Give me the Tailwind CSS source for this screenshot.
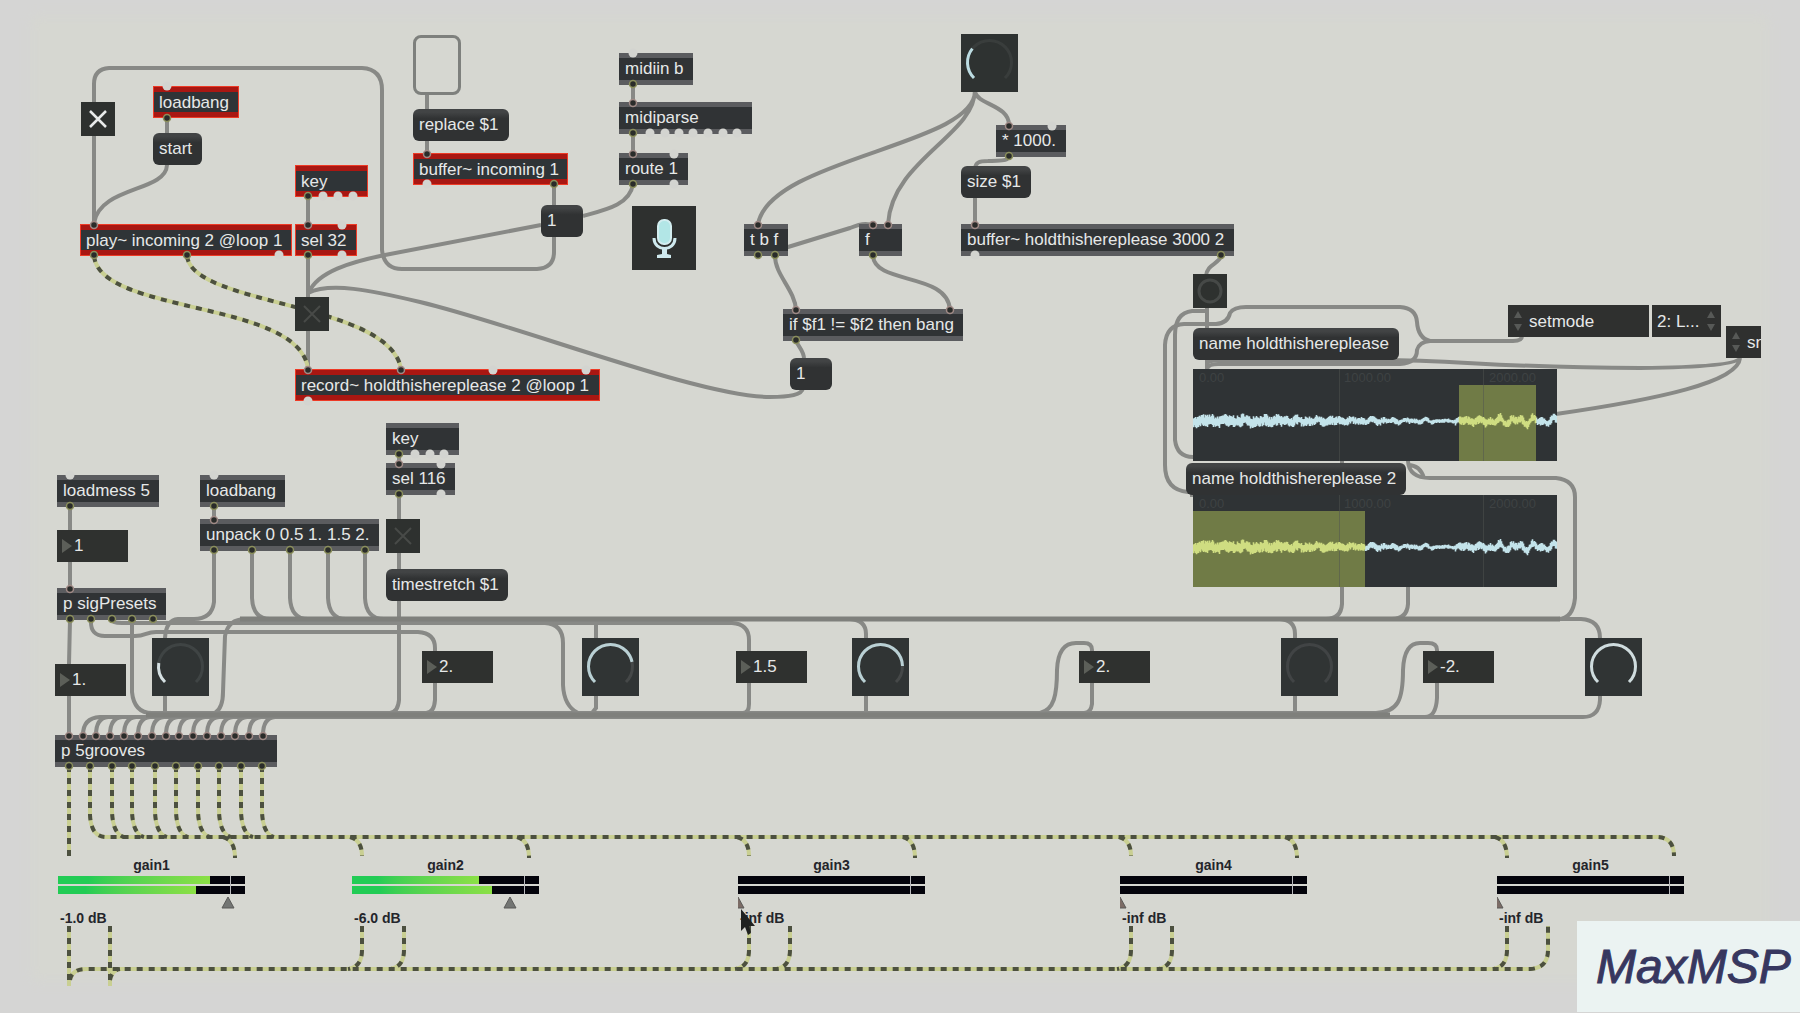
<!DOCTYPE html>
<html lang="en">
<head>
<meta charset="utf-8">
<meta name="viewport" content="width=device-width, initial-scale=1">
<title>MaxMSP patch</title>
<script src="https://cdn.jsdelivr.net/npm/@tailwindcss/browser@4"></script>
</head>
<body class="bg-[#d5d5d4] font-['Liberation_Sans',Arial,sans-serif]">
<main class="relative min-h-screen w-full overflow-hidden text-[17px] leading-none text-[#e6e8e8]
  [&_.obj]:absolute [&_.obj]:flex [&_.obj]:h-8 [&_.obj]:items-center [&_.obj]:whitespace-nowrap [&_.obj]:border-y-[5px] [&_.obj]:border-[#5b5c5f] [&_.obj]:bg-[#303335] [&_.obj]:pb-[2px] [&_.obj]:pl-[6px]
  [&_.hot]:absolute [&_.hot]:flex [&_.hot]:h-8 [&_.hot]:items-center [&_.hot]:whitespace-nowrap [&_.hot]:border-y-[6px] [&_.hot]:border-[#a91712] [&_.hot]:bg-[#2f3437] [&_.hot]:pl-[6px] [&_.hot]:outline-1 [&_.hot]:-outline-offset-1 [&_.hot]:outline-[#ee3a26]
  [&_.msg]:absolute [&_.msg]:flex [&_.msg]:h-8 [&_.msg]:items-center [&_.msg]:whitespace-nowrap [&_.msg]:rounded-md [&_.msg]:bg-linear-to-b [&_.msg]:from-[#424445] [&_.msg]:from-10% [&_.msg]:to-[#303233] [&_.msg]:to-30% [&_.msg]:pb-[2px] [&_.msg]:pl-[6px]
  [&_.num]:absolute [&_.num]:flex [&_.num]:h-8 [&_.num]:w-[71px] [&_.num]:items-center [&_.num]:gap-[2px] [&_.num]:bg-[#2f312f] [&_.num]:pl-[5px]
  [&_.num_input]:w-12 [&_.num_input]:bg-transparent [&_.num_input]:outline-none
  [&_.tog]:absolute [&_.tog]:size-[34px] [&_.tog]:bg-[#2e312f]
  [&_.knob]:absolute [&_.knob]:top-[638px] [&_.knob]:h-[58px] [&_.knob]:w-[57px] [&_.knob]:bg-[#303434]
  [&_.ctl]:absolute [&_.ctl]:inset-0 [&_.ctl]:size-full [&_.ctl]:opacity-0">

  <div class="absolute bottom-[40px] left-[40px] right-[40px] top-[24px] bg-[#d6d7d1] shadow-[0_0_12px_8px_#d6d7d1]"></div>

  <!-- patch cords -->
  <svg class="pointer-events-none absolute inset-0 size-full overflow-visible" fill="none" stroke="#888986" stroke-width="4" aria-hidden="true">
    <path d="M94 223V84Q94 69 109 68H362Q382 69 382 90V250Q384 269 402 269H537Q554 268 554 252V185"/>
    <path d="M167 118V133M167 165C166 192 100 186 94 223"/>
    <path d="M308 197V369M427 94V153M633 84V102M633 133V153"/>
    <path d="M633 184C630 205 605 210 583 216M541 225L385 255C350 262 318 272 309 292"/>
    <path d="M308 293C330 282 370 290 420 302C520 326 700 397 770 397C790 397 802 395 803 388"/>
    <path d="M975 90C978 145 770 158 758 224M975 90C975 135 892 160 888 224M975 92C978 105 1010 105 1009 126"/>
    <path d="M1009 156C1008 162 1000 160 988 161C978 161 976 163 975 168M975 196V224"/>
    <path d="M775 251L850 228Q866 221 873 226M775 256C775 275 795 290 796 310M873 256C875 285 948 272 950 310M796 340C797 346 804 350 804 359"/>
    <path d="M1221 256C1219 264 1207 264 1206 276"/>
    <path d="M1207 306V370M1207 311H1192Q1175 313 1175 335V440Q1177 457 1193 457"/>
    <path d="M1194 492H1188Q1165 490 1165 465V345Q1166 325 1184 324H1216Q1228 323 1230 313Q1234 307 1246 307H1400Q1416 308 1417 322Q1418 338 1430 341H1513Q1522 341 1522 336"/>
    <path d="M1207 369Q1208 364 1218 364H1400Q1417 363 1417 350Q1419 342 1430 341"/>
    <path d="M1207 363Q1210 360 1225 360H1380C1460 360 1500 368 1640 368Q1736 367 1740 358M1740 358C1738 382 1660 399 1556 414"/>
    <path d="M1408 461Q1409 478 1430 478H1556Q1575 480 1575 497V598Q1573 619 1558 619M1408 465Q1420 465 1424 478"/>
    <path d="M1342 461V463M1190 495H1400M1342 587V604Q1341 619 1326 619M1408 587V604Q1407 619 1392 619"/>
    <path d="M70 506V530M70 562V588M70 620L69 664V735M214 506V519"/>
    <path d="M214 550V602Q212 619 194 619H178Q166 620 165 638V713M252 550V598Q253 619 270 619M290 550V598Q291 619 308 619M328 550V598Q329 619 346 619M365 550V598Q366 619 384 619"/>
    <path d="M91 620Q90 636 105 636H135C146 636 146 632 156 632H418Q435 633 435 648V700Q434 713 426 713"/>
    <path d="M112 620Q112 623 122 623H732Q749 624 749 640V704Q749 713 743 713"/>
    <path d="M132 620V692Q134 713 152 713H1376C1398 712 1403 700 1403 670Q1404 643 1420 643H1428Q1437 643 1437 650V698Q1436 717 1425 717"/>
    <path d="M215 713Q223 708 223 692L225 636Q228 619 246 619H1581Q1600 620 1600 638V700Q1599 717 1583 717H100Q83 718 83 735"/>
    <path d="M545 623Q563 624 563 643V685Q564 706 578 713M596 620V708L592 713M850 619Q866 620 866 634V713M1280 619Q1295 620 1295 634V713"/>
    <path d="M1040 713C1054 710 1057 695 1057 670Q1058 643 1076 643H1084Q1092 643 1092 650V704Q1091 713 1084 713"/>
    <path d="M399 454V700Q398 712 390 713"/>
    <path d="M96 735Q96 718 108 717M110 735Q110 718 122 717M124 735Q124 718 136 717M138 735Q138 718 150 717M152 735Q152 718 164 717M166 735Q166 718 178 717M179 735Q179 718 191 717M193 735Q193 718 205 717M207 735Q207 718 219 717M221 735Q221 718 233 717M235 735Q235 718 247 717M249 735Q249 718 261 717M263 735Q263 718 275 717"/>
    <path d="M146 715H1390M240 619H1560" stroke="#7f807c" stroke-width="5"/>
  </svg>

  <!-- signal cords: pale green line with dark dashes -->
  <svg class="pointer-events-none absolute inset-0 size-full overflow-visible" fill="none" aria-hidden="true">
    <defs>
      <g id="signals">
        <path d="M94 256C100 315 300 300 308 369M187 256C192 306 390 302 401 369"/>
        <path d="M69 766V856M90 766V815Q91 837 106 837H1658Q1674 838 1674 856"/>
        <path d="M112 766V812Q113 834 124 837M132 766V812Q133 834 144 837M155 766V812Q156 834 167 837M176 766V812Q177 834 188 837M198 766V812Q199 834 210 837M219 766V812Q220 834 231 837M241 766V812Q242 834 253 837M262 766V812Q263 834 274 837"/>
        <path d="M223 837Q235 840 235 858M350 837Q362 840 362 856M517 837Q529 840 529 858M737 837Q749 840 749 856M903 837Q915 840 915 858M1119 837Q1131 840 1131 856M1285 837Q1297 840 1297 858M1495 837Q1507 840 1507 858"/>
        <path d="M69 926V986M110 926V986M70 980Q72 969 86 969H1530Q1548 968 1548 950V926M110 980Q112 970 120 969"/>
        <path d="M362 926V950Q362 967 348 969M404 926V950Q404 967 390 969M749 926V950Q749 967 735 969M790 926V950Q790 967 776 969M1131 926V950Q1131 967 1117 969M1172 926V950Q1172 967 1158 969M1507 926V950Q1507 967 1493 969"/>
      </g>
    </defs>
    <use href="#signals" stroke="#c9cf92" stroke-width="4"/>
    <use href="#signals" stroke="#4c503f" stroke-width="4" stroke-dasharray="6 6"/>
  </svg>

  <!-- playback and recording -->
  <label class="tog left-[81px] top-[102px]"><input class="ctl" type="checkbox" aria-label="Play" checked>
    <svg class="size-full" viewBox="0 0 34 34"><path d="M9 9l16 16M25 9L9 25" stroke="#e8eaea" stroke-width="2.5"/></svg></label>
  <div class="hot left-[153px] top-[86px] w-[86px]">loadbang</div>
  <button class="msg left-[153px] top-[133px] w-[49px]">start</button>
  <div class="hot left-[80px] top-[224px] w-[212px]">play~ incoming 2 @loop 1</div>
  <div class="hot left-[295px] top-[165px] w-[73px]">key</div>
  <div class="hot left-[295px] top-[224px] w-[62px]">sel 32</div>
  <label class="tog left-[295px] top-[297px]"><input class="ctl" type="checkbox" aria-label="Record">
    <svg class="size-full" viewBox="0 0 34 34"><path d="M9 9l16 16M25 9L9 25" stroke="#484a48" stroke-width="2"/></svg></label>
  <div class="hot left-[295px] top-[369px] w-[305px]">record~ holdthishereplease 2 @loop 1</div>

  <button class="absolute left-[413px] top-[35px] h-[60px] w-[48px] rounded-lg border-[3px] border-[#7e807d]" aria-label="Drop file"></button>
  <button class="msg left-[413px] top-[109px] w-[96px]">replace $1</button>
  <div class="hot left-[413px] top-[153px] w-[155px]">buffer~ incoming 1</div>
  <button class="msg left-[541px] top-[205px] w-[42px]">1</button>

  <div class="obj left-[619px] top-[53px] w-[74px]">midiin b</div>
  <div class="obj left-[619px] top-[102px] w-[133px]">midiparse</div>
  <div class="obj left-[619px] top-[153px] w-[69px]">route 1</div>
  <button class="absolute left-[632px] top-[206px] size-16 bg-[#2e302f]" aria-label="Microphone">
    <svg class="size-full" viewBox="0 0 64 64"><rect x="26" y="14" width="13" height="24" rx="6" fill="#b2e6e6" stroke="#d3edf0" stroke-width="2"/><path d="M22 32C22 46 43 46 43 32" fill="none" stroke="#cfe9ee" stroke-width="3"/><path d="M30 42H35V48L39 49V52H25V49L30 48Z" fill="#cfe9ee"/></svg></button>

  <!-- buffer sizing -->
  <label class="absolute left-[961px] top-[34px] h-[58px] w-[57px] bg-[#2e3231]"><input class="ctl" type="range" value="30" aria-label="Buffer seconds">
    <svg class="size-full" viewBox="0 0 57 58" fill="none" stroke-width="3"><path d="M13 44A22 22 0 1 1 44 44" stroke="#393d3c"/><path d="M13 44A22 22 0 1 1 44 44" stroke="#bcdce2" pathLength="100" stroke-dasharray="31 100"/></svg></label>
  <div class="obj left-[996px] top-[125px] w-[70px]">* 1000.</div>
  <button class="msg left-[961px] top-[166px] w-[70px]">size $1</button>
  <div class="obj left-[961px] top-[224px] w-[273px]">buffer~ holdthishereplease 3000 2</div>
  <div class="obj left-[744px] top-[224px] w-[44px]">t b f</div>
  <div class="obj left-[859px] top-[224px] w-[43px]">f</div>
  <div class="obj left-[783px] top-[309px] w-[180px]">if $f1 != $f2 then bang</div>
  <button class="msg left-[790px] top-[358px] w-[42px]">1</button>

  <!-- waveform views -->
  <button class="tog left-[1193px] top-[274px]" aria-label="Bang">
    <svg class="size-full" viewBox="0 0 34 34"><circle cx="17" cy="17" r="11" fill="none" stroke="#464947" stroke-width="3"/></svg></button>
  <svg class="absolute left-[1193px] top-[369px] h-[92px] w-[364px] bg-[#2f3335]" data-wave="266 343" role="img" aria-label="Waveform one"></svg>
  <svg class="absolute left-[1193px] top-[495px] h-[92px] w-[364px] bg-[#2f3335]" data-wave="0 172" role="img" aria-label="Waveform two"></svg>
  <button class="msg left-[1193px] top-[328px] w-[206px]">name holdthishereplease</button>
  <button class="msg left-[1186px] top-[463px] w-[220px]">name holdthishereplease 2</button>

  <div class="absolute left-[1508px] top-[305px] flex h-8 w-[213px] gap-[3px]">
    <div class="relative w-[141px] bg-[#2f302f]">
      <svg class="pointer-events-none absolute left-[6px] top-[6px] h-5 w-2" viewBox="0 0 8 20" fill="#575957"><path d="M0 7L4 0L8 7ZM0 13H8L4 20Z"/></svg>
      <select class="h-full w-full appearance-none bg-transparent pl-[21px] leading-none outline-none" aria-label="Attribute"><option>setmode</option></select>
    </div>
    <div class="relative grow bg-[#2f302f]">
      <svg class="pointer-events-none absolute right-[6px] top-[6px] h-5 w-2" viewBox="0 0 8 20" fill="#575957"><path d="M0 7L4 0L8 7ZM0 13H8L4 20Z"/></svg>
      <select class="h-full w-full appearance-none bg-transparent pl-[5px] leading-none outline-none" aria-label="Mode"><option>2: L...</option></select>
    </div>
  </div>
  <div class="absolute left-[1726px] top-[326px] h-8 w-[35px] overflow-hidden bg-[#2f302f]">
    <svg class="pointer-events-none absolute left-[6px] top-[6px] h-5 w-2" viewBox="0 0 8 20" fill="#575957"><path d="M0 7L4 0L8 7ZM0 13H8L4 20Z"/></svg>
    <select class="h-full w-24 appearance-none bg-transparent pl-[21px] leading-none outline-none" aria-label="Snap attribute"><option>snapto</option></select>
  </div>

  <!-- presets -->
  <div class="obj left-[57px] top-[475px] w-[102px]">loadmess 5</div>
  <label class="num left-[57px] top-[530px]"><svg class="h-[14px] w-[10px]" viewBox="0 0 10 14" fill="#5c5f59"><path d="M0 0L10 7L0 14Z"/></svg><input value="1" aria-label="Preset"></label>
  <div class="obj left-[57px] top-[588px] w-[109px]">p sigPresets</div>
  <label class="num left-[55px] top-[664px]"><svg class="h-[14px] w-[10px]" viewBox="0 0 10 14" fill="#5c5f59"><path d="M0 0L10 7L0 14Z"/></svg><input value="1." aria-label="Speed 1"></label>
  <div class="obj left-[200px] top-[475px] w-[85px]">loadbang</div>
  <div class="obj left-[200px] top-[519px] w-[179px]">unpack 0 0.5 1. 1.5 2.</div>
  <div class="obj left-[386px] top-[423px] w-[73px]">key</div>
  <div class="obj left-[386px] top-[463px] w-[69px]">sel 116</div>
  <label class="tog left-[386px] top-[519px]"><input class="ctl" type="checkbox" aria-label="Time stretch">
    <svg class="size-full" viewBox="0 0 34 34"><path d="M9 9l16 16M25 9L9 25" stroke="#484a48" stroke-width="2"/></svg></label>
  <button class="msg left-[386px] top-[569px] w-[122px]">timestretch $1</button>
  <div class="obj left-[55px] top-[735px] w-[222px]">p 5grooves</div>

  <!-- speed numbers and phase dials -->
  <label class="knob left-[152px]"><input class="ctl" type="range" value="20" aria-label="Dial 1">
    <svg class="size-full" viewBox="0 0 57 58" fill="none" stroke-width="3"><path d="M13 44A22 22 0 1 1 44 44" stroke="#3f4444"/><path d="M13 44A22 22 0 1 1 44 44" stroke="#d5e0e2" pathLength="100" stroke-dasharray="20 100"/></svg></label>
  <label class="num left-[422px] top-[651px]"><svg class="h-[14px] w-[10px]" viewBox="0 0 10 14" fill="#5c5f59"><path d="M0 0L10 7L0 14Z"/></svg><input value="2." aria-label="Speed 2"></label>
  <label class="knob left-[582px]"><input class="ctl" type="range" value="79" aria-label="Dial 2">
    <svg class="size-full" viewBox="0 0 57 58" fill="none" stroke-width="3"><path d="M13 44A22 22 0 1 1 44 44" stroke="#454848"/><path d="M13 44A22 22 0 1 1 44 44" stroke="#b9d0d4" pathLength="100" stroke-dasharray="79 100"/></svg></label>
  <label class="num left-[736px] top-[651px]"><svg class="h-[14px] w-[10px]" viewBox="0 0 10 14" fill="#5c5f59"><path d="M0 0L10 7L0 14Z"/></svg><input value="1.5" aria-label="Speed 3"></label>
  <label class="knob left-[852px]"><input class="ctl" type="range" value="83" aria-label="Dial 3">
    <svg class="size-full" viewBox="0 0 57 58" fill="none" stroke-width="3"><path d="M13 44A22 22 0 1 1 44 44" stroke="#454848"/><path d="M13 44A22 22 0 1 1 44 44" stroke="#b9d0d4" pathLength="100" stroke-dasharray="83 100"/></svg></label>
  <label class="num left-[1079px] top-[651px]"><svg class="h-[14px] w-[10px]" viewBox="0 0 10 14" fill="#5c5f59"><path d="M0 0L10 7L0 14Z"/></svg><input value="2." aria-label="Speed 4"></label>
  <label class="knob left-[1281px]"><input class="ctl" type="range" value="0" aria-label="Dial 4">
    <svg class="size-full" viewBox="0 0 57 58" fill="none" stroke-width="3"><path d="M13 44A22 22 0 1 1 44 44" stroke="#414445"/></svg></label>
  <label class="num left-[1423px] top-[651px]"><svg class="h-[14px] w-[10px]" viewBox="0 0 10 14" fill="#5c5f59"><path d="M0 0L10 7L0 14Z"/></svg><input value="-2." aria-label="Speed 5"></label>
  <label class="knob left-[1585px]"><input class="ctl" type="range" value="100" aria-label="Dial 5">
    <svg class="size-full" viewBox="0 0 57 58" fill="none" stroke-width="3"><path d="M13 44A22 22 0 1 1 44 44" stroke="#cfdcde"/></svg></label>

  <!-- inlets and outlets -->
  <svg id="ports" class="pointer-events-none absolute inset-0 size-full overflow-visible" aria-hidden="true"></svg>

  <!-- gain sliders -->
  <div id="gains"></div>

  <svg class="pointer-events-none absolute left-[740px] top-[908px] h-[28px] w-[16px]" viewBox="0 0 16 28" aria-hidden="true"><path d="M1 1V23L5 19L8 27L11 25L9 18H15Z" fill="#1f2120"/></svg>

  <div class="absolute bottom-px right-0 flex h-[91px] w-[223px] items-center bg-[#ebf3f2] pl-[19px] text-[48px] italic text-[#37375f] [-webkit-text-stroke:1px_#37375f]">MaxMSP</div>
</main>

<script>
const NS = 'http://www.w3.org/2000/svg';
const add = (parent, tag, attrs) => {
  const el = document.createElementNS(NS, tag);
  for (const k in attrs) el.setAttribute(k, attrs[k]);
  parent.append(el);
  return el;
};

// [edge y, connected x positions, free x positions]
const ports = document.getElementById('ports');
const inlet = '#a08a86', outlet = '#8b8f5c';
[
  [86, [], [167]], [118, [167], [], outlet], [225, [94, 308, 758, 873, 888, 975], [342], inlet],
  [255, [94, 187, 308, 758, 775, 873, 1221], [279, 342, 975], outlet],
  [196, [308], [323, 338, 353], outlet], [370, [308, 401], [493, 586], inlet], [401, [], [308]],
  [154, [427, 633], [674], inlet], [184, [554, 633], [427, 674], outlet],
  [53, [], [633]], [84, [633], [], outlet], [103, [633], [], inlet], [133, [633], [650, 665, 679, 693, 708, 723, 737], outlet],
  [126, [1009], [1052], inlet], [156, [1009], [], outlet], [310, [796, 950], [], inlet], [340, [796], [], outlet],
  [475, [], [70, 214]], [506, [70, 214], [], outlet], [520, [214], [], inlet], [550, [214, 252, 290, 328, 365], [], outlet],
  [454, [399], [415, 430, 444], outlet], [464, [399], [441], inlet], [494, [399], [441], outlet],
  [589, [70], [], inlet], [619, [70, 91, 112, 132, 153], [], outlet],
  [736, [69, 83, 96, 110, 124, 138, 152, 166, 179, 193, 207, 221, 235, 249, 263], [], inlet],
  [766, [69, 90, 112, 132, 155, 176, 198, 219, 241, 262], [], outlet]
].forEach(([y, used, free, ring]) => {
  used.forEach(x => add(ports, 'circle', { cx: x, cy: y, r: 3.5, fill: '#2a2c2a', stroke: ring, 'stroke-width': 1.5 }));
  free.forEach(x => add(ports, 'circle', { cx: x, cy: y, r: 4.5, fill: '#d3d4d0' }));
});

// Buffer contents, tinted where selected
document.querySelectorAll('[data-wave]').forEach(svg => {
  const [from, to] = svg.dataset.wave.split(' ').map(Number);
  add(svg, 'rect', { x: from, y: 16, width: to - from, height: 76, fill: '#707b46' });
  [146, 290].forEach(x => add(svg, 'rect', { x, y: 0, width: 1, height: 92, fill: '#505450', opacity: 0.5 }));
  [[6, '0.00'], [151, '1000.00'], [296, '2000.00']].forEach(([x, label]) => {
    add(svg, 'text', { x, y: 13, 'font-size': 13, fill: '#3e4243' }).textContent = label;
  });
  let plain = '', tinted = '', seed = 7;
  const rnd = () => (seed = (seed * 16807) % 2147483647) / 2147483647;
  for (let x = 0; x < 364; x++) {
    const amp = x < 60 ? 6.5 : x < 250 ? 6.5 - (x - 60) / 44 : x < 262 ? 2.5 : 4.5;
    const wobble = Math.sin(x / 1.7) + Math.sin(x / 2.9);
    const drift = wobble * (x > 290 ? 2 : x > 240 && x < 262 ? 0.3 : 0.9);
    const top = 52 + drift - amp * (0.4 + 0.6 * rnd());
    const bottom = 52 + drift + amp * (0.4 + 0.6 * rnd());
    const seg = `M${x + 0.5} ${top.toFixed(1)}V${bottom.toFixed(1)}`;
    if (x >= from && x < to) tinted += seg; else plain += seg;
  }
  add(svg, 'path', { d: plain, stroke: '#c3e3ea', 'stroke-width': 1.6 });
  add(svg, 'path', { d: tinted, stroke: '#cfdd81', 'stroke-width': 1.6 });
});

// name, x, level of both channels, thumb position, readout
document.getElementById('gains').innerHTML = [
  ['gain1', 58, 152, 138, 170, '-1.0 dB'],
  ['gain2', 352, 127, 140, 158, '-6.0 dB'],
  ['gain3', 738, 0, 0, 0, '-inf dB'],
  ['gain4', 1120, 0, 0, 0, '-inf dB'],
  ['gain5', 1497, 0, 0, 0, '-inf dB']
].map(([name, x, a, b, thumb, db]) => `
  <label class="absolute top-[857px] flex w-[187px] flex-col text-sm font-bold leading-4 text-[#24252b]" style="left:${x}px">
    <span class="text-center">${name}</span>
    <span class="relative mt-[3px] flex flex-col gap-[2px]">
      <span class="h-2 bg-[#04040c]"><span class="block h-full bg-linear-to-r from-[#22cc55] from-20% to-[#8be045]" style="width:${a}px"></span></span>
      <span class="h-2 bg-[#04040c]"><span class="block h-full bg-linear-to-r from-[#22cc55] from-20% to-[#8be045]" style="width:${b}px"></span></span>
      <span class="absolute inset-y-0 left-[172px] w-px bg-[#b9b9bd]"></span>
    </span>
    <span class="mt-[2px] h-[13px] overflow-hidden"><svg class="h-[13px] w-[14px]" style="margin-left:${thumb ? thumb - 7 : -7}px" viewBox="0 0 14 13"><path d="M7 1L13 12H1Z" fill="${thumb ? '#737573' : '#7c6c66'}" stroke="#5a5a58"/></svg></span>
    <span class="mt-px pl-[2px]">${db}</span>
    <input class="ctl" type="range" value="${thumb}" max="187" aria-label="${name}">
  </label>`).join('');
</script>
</body>
</html>
